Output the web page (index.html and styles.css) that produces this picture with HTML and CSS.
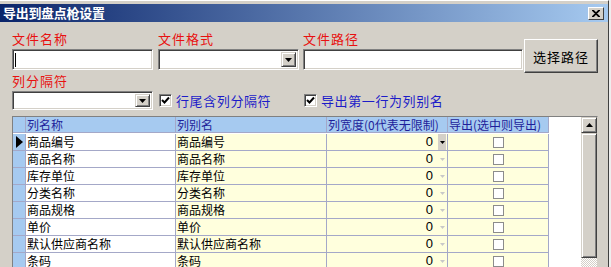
FILE: index.html
```html
<!DOCTYPE html>
<html lang="zh-CN">
<head>
  <meta charset="UTF-8">
  <title>导出到盘点枪设置</title>
  <link rel="stylesheet" href="styles.css">
</head>
<body>

  <div class="window">
    <!-- Title bar -->
    <div class="titlebar">
      <span class="title">导出到盘点枪设置</span>
      <span class="close">
        <svg width="8" height="7" viewBox="0 0 8 7"><path d="M0 0 L7 7 M1 0 L8 7 M7 0 L0 7 M8 0 L1 7" stroke="#000" stroke-width="1.2"/></svg>
      </span>
    </div>

    <div class="form">
      <!-- File fields -->
      <div class="row-top">
        <div class="field f-name">
          <div class="lbl">文件名称</div>
          <div class="edit"><span class="caret"></span></div>
        </div>
        <div class="field f-format">
          <div class="lbl">文件格式</div>
          <div class="edit combo">
            <span class="drop"><svg width="7" height="4" viewBox="0 0 7 4"><path d="M0 0 H7 L3.5 4 Z" fill="#000"/></svg></span>
          </div>
        </div>
        <div class="field f-path">
          <div class="lbl">文件路径</div>
          <div class="edit"></div>
        </div>
        <button class="btn">选择路径</button>
      </div>

      <!-- Separator options -->
      <div class="lbl">列分隔符</div>
      <div class="row-sep">
        <div class="edit combo sep-combo">
          <span class="drop"><svg width="7" height="4" viewBox="0 0 7 4"><path d="M0 0 H7 L3.5 4 Z" fill="#000"/></svg></span>
        </div>
        <label class="chk chk-tail">
          <span class="box"><svg width="9" height="9" viewBox="0 0 9 9"><path d="M1 4 L3.5 6.5 L8 1.5" fill="none" stroke="#000" stroke-width="2"/></svg></span>
          行尾含列分隔符
        </label>
        <label class="chk">
          <span class="box"><svg width="9" height="9" viewBox="0 0 9 9"><path d="M1 4 L3.5 6.5 L8 1.5" fill="none" stroke="#000" stroke-width="2"/></svg></span>
          导出第一行为列别名
        </label>
      </div>

      <!-- Column grid -->
      <div class="grid">
        <div class="table" id="table">
          <div class="hd ind"></div>
          <div class="hd">列名称</div>
          <div class="hd">列别名</div>
          <div class="hd">列宽度(0代表无限制)</div>
          <div class="hd">导出(选中则导出)</div>
        </div>
        <div class="blank"></div>
        <div class="vscroll">
          <div class="sb-btn"><svg width="7" height="4" viewBox="0 0 7 4"><path d="M0 4 H7 L3.5 0 Z" fill="#000"/></svg></div>
          <div class="sb-thumb"></div>
          <div class="sb-track"></div>
        </div>
      </div>
    </div>
  </div>

  <script>
    // Fill grid rows
    const rows = ['商品编号', '商品名称', '库存单位', '分类名称', '商品规格', '单价', '默认供应商名称', '条码'];
    const table = document.getElementById('table');

    rows.forEach(function(name, i) {
      const current = i === 0;
      table.insertAdjacentHTML('beforeend', `
        <div class="cell ind">${current ? '<svg width="7" height="12" viewBox="0 0 7 12"><path d="M0 0 L7 6 L0 12 Z" fill="#000"/></svg>' : ''}</div>
        <div class="cell name">${name}</div>
        <div class="cell alias">${name}</div>
        <div class="cell width"><span class="num">0</span><span class="arrow${current ? ' on' : ''}"><svg width="5" height="3" viewBox="0 0 5 3"><path d="M0 0 H5 L2.5 3 Z"/></svg></span></div>
        <div class="cell export"><span class="cb"></span></div>
      `);
    });
  </script>

</body>
</html>
```

FILE: styles.css
```css
body {
  margin: 0;
  background: #eeeeee;
  font-family: "Noto Sans CJK SC", "Liberation Sans", sans-serif;
  font-size: 12px;
}

.window {
  width: 609px;
  height: 267px;
  box-sizing: border-box;
  background: #d4d0c8;
  border-top: 1px solid #ffffff;
  border-right: 1px solid #404040;
  padding-top: 3px;
  overflow: hidden;
}

.titlebar {
  display: flex;
  align-items: flex-start;
  height: 18px;
  background: linear-gradient(to right, #0a246a, #a6caf0);
}

.title {
  color: #ffffff;
  font-weight: bold;
  font-size: 13px;
  line-height: 18px;
  padding-left: 3px;
  letter-spacing: -0.3px;
}

.close {
  margin-left: auto;
  margin-right: 4px;
  margin-top: 3px;
  width: 16px;
  height: 13px;
  box-sizing: border-box;
  background: #d4d0c8;
  border: 1px solid;
  border-color: #ffffff #404040 #404040 #ffffff;
  display: flex;
  align-items: center;
  justify-content: center;
}

.form {
  padding-left: 12px;
}

.row-top {
  display: flex;
  align-items: flex-start;
  padding-top: 9px;
}

.lbl {
  color: #e81010;
  font-size: 13px;
  line-height: 16px;
  letter-spacing: 1px;
}

.field .lbl {
  margin-bottom: 2px;
}

.edit {
  position: relative;
  height: 21px;
  box-sizing: border-box;
  background: #ffffff;
  border: 1px solid;
  border-color: #808080 #ffffff #ffffff #808080;
  box-shadow: inset 1px 1px 0 #404040, inset -1px -1px 0 #d4d0c8;
}

.f-name { width: 141px; margin-right: 5px; }
.f-format { width: 141px; margin-right: 4px; }
.f-path { width: 220px; margin-right: 1px; }

.caret {
  position: absolute;
  left: 2px;
  top: 3px;
  width: 1px;
  height: 14px;
  background: #000;
}

.combo .drop {
  position: absolute;
  right: 2px;
  top: 2px;
  bottom: 2px;
  width: 15px;
  box-sizing: border-box;
  background: #d4d0c8;
  border: 1px solid;
  border-color: #d4d0c8 #404040 #404040 #d4d0c8;
  box-shadow: inset 1px 1px 0 #ffffff, inset -1px -1px 0 #808080;
  display: flex;
  align-items: center;
  justify-content: center;
}

.btn {
  margin-top: 8px;
  width: 74px;
  height: 34px;
  padding: 0;
  background: #d4d0c8;
  border: 1px solid;
  border-color: #ffffff #404040 #404040 #ffffff;
  box-shadow: inset -1px -1px 0 #808080;
  font-family: inherit;
  font-size: 13px;
  letter-spacing: 1px;
  color: #000;
}

.row-sep {
  display: flex;
  align-items: center;
  margin-top: 2px;
}

.sep-combo {
  width: 141px;
  height: 19px;
  margin-right: 6px;
}

.chk {
  display: flex;
  align-items: center;
  color: #1c1cc8;
  font-size: 13px;
  line-height: 16px;
  letter-spacing: 0.6px;
}

.chk-tail {
  width: 145px;
}

.box {
  width: 13px;
  height: 13px;
  box-sizing: border-box;
  margin-right: 4px;
  background: #ffffff;
  border: 1px solid;
  border-color: #808080 #ffffff #ffffff #808080;
  box-shadow: inset 1px 1px 0 #404040, inset -1px -1px 0 #d4d0c8;
  display: flex;
  align-items: center;
  justify-content: center;
}

.grid {
  display: flex;
  width: 586px;
  height: 200px;
  margin-top: 6px;
  box-sizing: border-box;
  background: #ffffff;
  border-top: 1px solid #808080;
  border-left: 1px solid #808080;
  border-right: 1px solid #d4d0c8;
}

.table {
  display: grid;
  grid-template-columns: 13px 150px 151px 121px 101px;
  grid-auto-rows: 17px;
  align-self: flex-start;
}

.hd, .cell {
  box-sizing: border-box;
  border-right: 1px solid #a4a8c8;
  border-bottom: 1px solid #a4a8c8;
  white-space: nowrap;
  overflow: hidden;
  line-height: 16px;
  padding-left: 1px;
}

.hd {
  height: 16px;
  line-height: 15px;
  background: #a6caf0;
  color: #1e1e9a;
}

.ind {
  background: #a6caf0;
  padding: 0;
  display: flex;
  align-items: center;
  justify-content: center;
}

.cell.name {
  background: #ffffff;
  color: #000;
}

.cell.alias, .cell.width, .cell.export {
  background: #ffffdd;
  color: #000;
}

.cell.width {
  display: flex;
  justify-content: flex-end;
  align-items: stretch;
  padding-right: 1px;
}

.num {
  margin-right: 5px;
  font-family: "Liberation Sans", sans-serif;
  font-size: 13px;
}

.arrow {
  width: 8px;
  display: flex;
  align-items: center;
  justify-content: center;
  fill: #c8c8c8;
}

.arrow.on {
  background: #d4d0c8;
  fill: #000;
}

.cell.export {
  display: flex;
  align-items: center;
  justify-content: center;
}

.cb {
  width: 11px;
  height: 11px;
  box-sizing: border-box;
  background: #ffffff;
  border: 1px solid #8c8c8c;
}

.blank {
  width: 32px;
}

.vscroll {
  width: 16px;
  display: flex;
  flex-direction: column;
}

.sb-btn, .sb-thumb {
  box-sizing: border-box;
  background: #d4d0c8;
  border: 1px solid;
  border-color: #d4d0c8 #404040 #404040 #d4d0c8;
  box-shadow: inset 1px 1px 0 #ffffff, inset -1px -1px 0 #808080;
}

.sb-btn {
  height: 16px;
  display: flex;
  align-items: center;
  justify-content: center;
}

.sb-thumb {
  height: 125px;
}

.sb-track {
  flex: 1;
  background: repeating-conic-gradient(#d4d0c8 0 25%, #ffffff 0 50%) 0 0 / 2px 2px;
}
```
